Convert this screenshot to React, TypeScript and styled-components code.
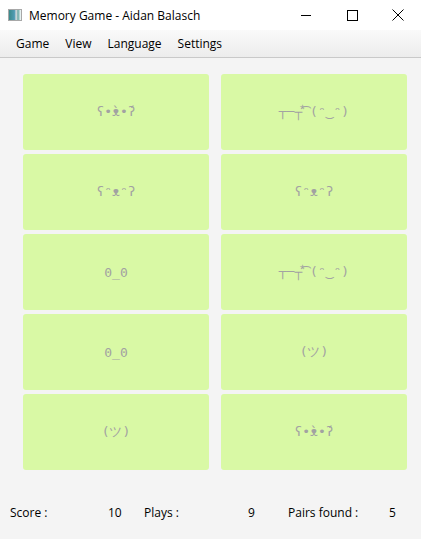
import React from "react";
import styled, { createGlobalStyle } from "styled-components";

const GlobalStyle = createGlobalStyle`
  html, body {
    margin: 0;
    padding: 0;
    background: #f4f4f4;
  }
  #root {
    width: 421px;
    height: 539px;
  }
`;

const cards = [
  "ʕ•̀ᴥ•́ʔ",
  "┬─┬⃰͡ (ᵔ‿ᵔ)",
  "ʕᵔᴥᵔʔ",
  "ʕᵔᴥᵔʔ",
  "0_0",
  "┬─┬⃰͡ (ᵔ‿ᵔ)",
  "0_0",
  "(ツ)",
  "(ツ)",
  "ʕ•̀ᴥ•́ʔ",
];

const stats = [
  { label: "Score :", value: "10", width: 98, valueWidth: 36 },
  { label: "Plays :", value: "9", width: 104, valueWidth: 40 },
  { label: "Pairs found :", value: "5", width: 101, valueWidth: 30 },
];

function App() {
  return (
    <Window>
      <GlobalStyle />
      <TitleBar>
        <AppIcon />
        <Title>Memory Game - Aidan Balasch</Title>
        <Controls>
          <ControlBtn>
            <svg width="12" height="12" viewBox="0 0 12 12">
              <path d="M1 6.5h10" stroke="#000" strokeWidth="1" />
            </svg>
          </ControlBtn>
          <ControlBtn>
            <svg width="12" height="12" viewBox="0 0 12 12">
              <rect x="1.5" y="1.5" width="10" height="10" fill="none" stroke="#000" strokeWidth="1" />
            </svg>
          </ControlBtn>
          <ControlBtn>
            <svg width="12" height="12" viewBox="0 0 12 12">
              <path d="M0.5 0.5l11 11M11.5 0.5l-11 11" stroke="#000" strokeWidth="1" />
            </svg>
          </ControlBtn>
        </Controls>
      </TitleBar>
      <MenuBar>
        <MenuItem>Game</MenuItem>
        <MenuItem>View</MenuItem>
        <MenuItem>Language</MenuItem>
        <MenuItem>Settings</MenuItem>
      </MenuBar>
      <Board>
        {cards.map((face, i) => (
          <Card key={i}>{face}</Card>
        ))}
      </Board>
      <Footer>
        {stats.map((s) => (
          <React.Fragment key={s.label}>
            <StatLabel $w={s.width}>{s.label}</StatLabel>
            <StatValue $w={s.valueWidth}>{s.value}</StatValue>
          </React.Fragment>
        ))}
      </Footer>
    </Window>
  );
}

export default App;

const Window = styled.div`
  display: flex;
  flex-direction: column;
  width: 421px;
  height: 539px;
  background: #f4f4f4;
  font-family: "Open Sans", "Noto Sans", sans-serif;
  font-size: 12px;
  color: #000;
`;

const TitleBar = styled.div`
  display: flex;
  align-items: center;
  height: 30px;
  background: #fff;
  padding-left: 8px;
`;

const AppIcon = styled.div`
  width: 12px;
  height: 10px;
  border: 1px solid #a8a8a8;
  background: linear-gradient(90deg, #3b8a8a 0%, #4f9bb4 45%, #d9dde0 60%, #6aa9a6 75%, #ffffff 100%);
  margin-right: 7px;
`;

const Title = styled.div`
  flex: 1;
  font-size: 12px;
  color: #000;
`;

const Controls = styled.div`
  display: flex;
  height: 100%;
`;

const ControlBtn = styled.div`
  display: flex;
  align-items: center;
  justify-content: center;
  width: 46px;
  height: 100%;
`;

const MenuBar = styled.div`
  display: flex;
  align-items: center;
  height: 27px;
  padding-left: 8px;
  background: linear-gradient(#fafafa, #ececec);
  border-bottom: 1px solid #c9c9c9;
`;

const MenuItem = styled.div`
  padding: 0 8px;
  font-size: 12px;
  color: #000;
`;

const Board = styled.div`
  display: grid;
  grid-template-columns: 186px 186px;
  grid-auto-rows: 76px;
  column-gap: 12px;
  row-gap: 4px;
  padding: 16px 0 0 23px;
`;

const Card = styled.div`
  display: flex;
  align-items: center;
  justify-content: center;
  background: #d9f9a5;
  border-radius: 3px;
  font-family: "DejaVu Sans Mono", "Liberation Mono", monospace;
  font-size: 13px;
  color: #a2a2a2;
  white-space: nowrap;
`;

const Footer = styled.div`
  display: flex;
  align-items: center;
  margin-top: 34px;
  padding-left: 10px;
  font-size: 12px;
`;

const StatLabel = styled.div<{ $w: number }>`
  width: ${(p) => p.$w}px;
`;

const StatValue = styled.div<{ $w: number }>`
  width: ${(p) => p.$w}px;
`;
